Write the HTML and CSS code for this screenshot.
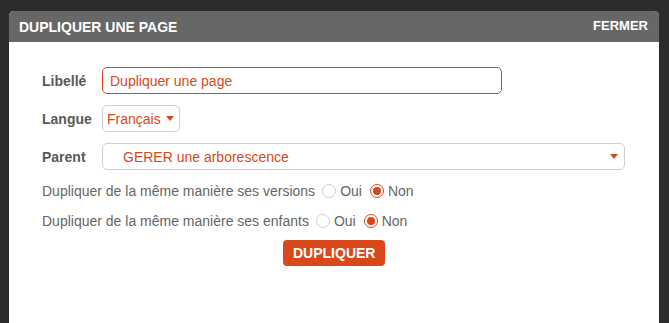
FILE: index.html
```html
<!DOCTYPE html>
<html lang="fr">
<head>
  <meta charset="UTF-8" />
  <meta name="viewport" content="width=device-width, initial-scale=1.0"/>
  <title>Dupliquer une page</title>
  <link rel="stylesheet" href="styles.css">
</head>
<body>
  <div class="modal">
    <div class="modal-head">
      <span class="modal-title">DUPLIQUER UNE PAGE</span>
      <a class="close" href="#">FERMER</a>
    </div>

    <div class="modal-body">
      <!-- champs -->
      <div class="field">
        <label class="label" for="libelle">Libellé</label>
        <input class="text-input" type="text" id="libelle" value="Dupliquer une page">
      </div>
      <div class="field">
        <span class="label">Langue</span>
        <div class="select select-small">
          <span>Français</span>
          <span class="caret"></span>
        </div>
      </div>
      <div class="field">
        <span class="label">Parent</span>
        <div class="select select-wide">
          <span>GERER une arborescence</span>
          <span class="caret"></span>
        </div>
      </div>

      <div class="choice">
        <span>Dupliquer de la même manière ses versions</span>
        <label class="radio"><input type="radio" name="versions"> Oui</label>
        <label class="radio"><input type="radio" name="versions" checked> Non</label>
      </div>
      <div class="choice">
        <span>Dupliquer de la même manière ses enfants</span>
        <label class="radio"><input type="radio" name="enfants"> Oui</label>
        <label class="radio"><input type="radio" name="enfants" checked> Non</label>
      </div>

      <button class="btn">DUPLIQUER</button>
    </div>
  </div>
</body>
</html>
```

FILE: styles.css
```css
* {
  margin: 0;
  padding: 0;
  box-sizing: border-box;
}

body {
  font-family: 'Liberation Sans', Arial, sans-serif;
  background: #2c2c2c;
  height: 323px;
  overflow: hidden;
  padding: 11px 10px 0 9px;
}

.modal {
  width: 650px;
  height: 312px;
  background: #fff;
  border-radius: 5px 5px 0 0;
  overflow: hidden;
}

.modal-head {
  height: 31px;
  background: #686767;
  color: #fff;
  display: flex;
  align-items: center;
  justify-content: space-between;
  padding: 0 11px 0 10px;
}

.modal-title {
  font-size: 14px;
  font-weight: 700;
}

.close {
  color: #fff;
  font-size: 13px;
  font-weight: 700;
  text-decoration: none;
  margin-top: -3px;
}

.modal-body {
  padding: 25px 0 0 33px;
  display: flex;
  flex-direction: column;
}

.field {
  display: flex;
  align-items: center;
  height: 27px;
  margin-bottom: 11px;
}

.label {
  width: 60px;
  font-size: 14px;
  font-weight: 700;
  color: #595959;
}

.text-input {
  width: 400px;
  height: 27px;
  border: 1px solid #d9481b;
  border-radius: 5px;
  padding: 0 7px;
  font-family: inherit;
  font-size: 14px;
  color: #d9481b;
  outline: none;
}

.select {
  height: 27px;
  border: 1px solid #cfcfcf;
  border-radius: 5px;
  display: flex;
  align-items: center;
  justify-content: space-between;
  font-size: 14px;
  color: #d9481b;
}

.select-small {
  width: 78px;
  padding: 0 5px 0 4px;
}

.select-wide {
  width: 523px;
  padding: 0 6px 0 20px;
}

.caret {
  width: 0;
  height: 0;
  border-left: 4px solid transparent;
  border-right: 4px solid transparent;
  border-top: 5px solid #d9481b;
}

.choice {
  display: flex;
  align-items: center;
  height: 20px;
  font-size: 14px;
  color: #666;
  margin-bottom: 10px;
}

.choice > span {
  margin-right: 7px;
}

.radio {
  display: flex;
  align-items: center;
  margin-right: 8px;
}

.radio input {
  appearance: none;
  width: 14px;
  height: 14px;
  border: 1px solid #d6cccc;
  border-radius: 50%;
  margin-right: 4px;
  display: grid;
  place-items: center;
}

.radio input:checked {
  border-color: #d9481b;
}

.radio input:checked::after {
  content: "";
  width: 8px;
  height: 8px;
  border-radius: 50%;
  background: #d9481b;
}

.btn {
  align-self: flex-start;
  margin: -1px 0 0 241px;
  height: 26px;
  padding: 0 10px;
  background: #d9481b;
  border: none;
  border-radius: 4px;
  color: #fff;
  font-family: inherit;
  font-size: 14px;
  font-weight: 700;
  cursor: pointer;
}
```
